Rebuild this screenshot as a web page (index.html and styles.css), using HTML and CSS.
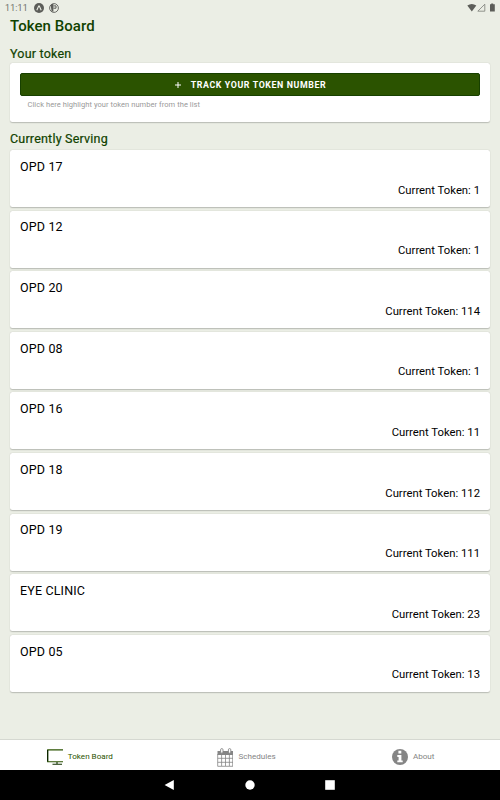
FILE: index.html
```html
<!DOCTYPE html>
<html lang="en">
<head>
    <meta charset="UTF-8">
    <meta name="viewport" content="width=device-width, initial-scale=1.0">
    <title>Token Board</title>
    <link rel="stylesheet" href="styles.css">
</head>
<body>

    <!-- Status bar -->
    <div class="status-bar">
        <span class="time">11:11</span>
        <svg class="status-icon" viewBox="0 0 10 10">
            <circle cx="5" cy="5" r="5" fill="#5c5d59"/>
            <path d="M2.8 7.2 L4.7 3 H5.3 L7.2 7.2" fill="none" stroke="#ebeee5" stroke-width="1.1"/>
        </svg>
        <svg class="status-icon" viewBox="0 0 10 10">
            <circle cx="5" cy="5" r="4.4" fill="#ebeee5" stroke="#5c5d59" stroke-width="0.9"/>
            <path d="M1.6 2.2 L3 1 H4.4 V8.8 L2.6 8.2 Z" fill="#5c5d59"/>
            <path d="M4.4 2.9 H7 V5.2 H4.4" fill="none" stroke="#5c5d59" stroke-width="1"/>
        </svg>
        <svg class="signals" viewBox="0 0 30 10">
            <path d="M0.3 2.6 Q4.8 -0.8 9.3 2.6 L4.8 8.4 Z" fill="#5c5d59"/>
            <path d="M17.8 1.2 V8.2 H10.8 Z" fill="none" stroke="#7b7d77" stroke-width="0.8"/>
            <path d="M23 1.3 H24.2 V0.4 H26.2 V1.3 H27.8 V8.4 H23 Z" fill="#5c5d59"/>
        </svg>
    </div>

    <!-- Content -->
    <div class="content">
        <h1>Token Board</h1>

        <h2>Your token</h2>
        <div class="card track">
            <button class="track-button">
                <svg class="plus" viewBox="0 0 8 8"><path d="M4 1 V7 M1 4 H7" stroke="#fff" stroke-width="1"/></svg>
                <span>TRACK YOUR TOKEN NUMBER</span>
            </button>
            <p class="hint">Click here highlight your token number from the list</p>
        </div>

        <h2 class="serving">Currently Serving</h2>
        <div class="token-list">
            <div class="card token">
                <div class="room">OPD 17</div>
                <div class="current">Current Token: 1</div>
            </div>
            <div class="card token">
                <div class="room">OPD 12</div>
                <div class="current">Current Token: 1</div>
            </div>
            <div class="card token">
                <div class="room">OPD 20</div>
                <div class="current">Current Token: 114</div>
            </div>
            <div class="card token">
                <div class="room">OPD 08</div>
                <div class="current">Current Token: 1</div>
            </div>
            <div class="card token">
                <div class="room">OPD 16</div>
                <div class="current">Current Token: 11</div>
            </div>
            <div class="card token">
                <div class="room">OPD 18</div>
                <div class="current">Current Token: 112</div>
            </div>
            <div class="card token">
                <div class="room">OPD 19</div>
                <div class="current">Current Token: 111</div>
            </div>
            <div class="card token">
                <div class="room">EYE CLINIC</div>
                <div class="current">Current Token: 23</div>
            </div>
            <div class="card token">
                <div class="room">OPD 05</div>
                <div class="current">Current Token: 13</div>
            </div>
        </div>
    </div>

    <!-- Tabs -->
    <div class="tab-bar">
        <div class="tab selected">
            <svg class="tab-icon" viewBox="0 0 16 16">
                <path d="M16 0.9 H0.7 V12.7 H16" fill="none" stroke="#2b5300" stroke-width="1.1"/>
                <path d="M0.6 1 V12.6" stroke="#0c2600" stroke-width="1.2"/>
                <path d="M10 13 V15 M5.5 15.3 H15" stroke="#123000" stroke-width="1.1"/>
            </svg>
            <span>Token Board</span>
        </div>
        <div class="tab">
            <svg class="tab-icon calendar" viewBox="0 0 16 19">
                <path d="M0.5 3 H16 V7 H0.5 Z" fill="#858585"/>
                <path d="M0.7 6 V18.3 H16 M0.7 10.3 H16 M0.7 14.3 H16 M4.6 7 V18 M8.5 7 V18 M12.4 7 V18 M15.7 6 V18" fill="none" stroke="#858585" stroke-width="0.8"/>
                <rect x="3.6" y="0.6" width="2.4" height="4.6" rx="1.2" fill="#fff" stroke="#858585" stroke-width="0.9"/>
                <rect x="11.4" y="0.6" width="2.4" height="4.6" rx="1.2" fill="#fff" stroke="#858585" stroke-width="0.9"/>
            </svg>
            <span>Schedules</span>
        </div>
        <div class="tab">
            <svg class="tab-icon" viewBox="0 0 16 16">
                <circle cx="8" cy="8" r="8" fill="#858585"/>
                <path d="M6.4 1.8 H9.3 V4.6 H6.4 Z M5.3 6 H9.4 V11.4 H10.7 V13.3 H5.3 V11.4 H6.6 V7.9 H5.3 Z" fill="#fff"/>
            </svg>
            <span>About</span>
        </div>
    </div>

    <!-- Android navigation -->
    <div class="nav-bar">
        <svg class="nav-icon" viewBox="0 0 10 10"><path d="M8.8 0 V10 L-0.4 5 Z" fill="#fff"/></svg>
        <svg class="nav-icon" viewBox="0 0 10 10"><circle cx="5" cy="5" r="4.7" fill="#fff"/></svg>
        <svg class="nav-icon" viewBox="0 0 10 10"><rect x="0.2" y="0.2" width="9.6" height="9.6" fill="#fff"/></svg>
    </div>

</body>
</html>
```

FILE: styles.css
```css
* {
    box-sizing: border-box;
}

body {
    margin: 0;
    height: 800px;
    display: flex;
    flex-direction: column;
    background-color: #ebeee5;
    font-family: Roboto, Arial, sans-serif;
    color: #000;
    overflow: hidden;
}

svg {
    display: block;
    flex-shrink: 0;
}

/* Status bar */
.status-bar {
    height: 15px;
    padding: 0 2px 0 5px;
    display: flex;
    align-items: center;
    color: #6b6d67;
}

.time {
    width: 29px;
    font-size: 8.8px;
    letter-spacing: 0.2px;
}

.status-icon {
    width: 10px;
    height: 10px;
    margin-right: 5px;
}

.signals {
    width: 30px;
    height: 10px;
    margin-left: auto;
    margin-right: 1px;
}

/* Content */
.content {
    flex: 1;
    padding: 0 10px;
}

h1, h2 {
    margin: 0;
    color: #114200;
}

h1 {
    font-size: 15px;
    font-weight: 500;
    line-height: 22px;
    letter-spacing: 0.05px;
}

h2 {
    font-size: 12.5px;
    font-weight: 400;
    line-height: 16px;
    letter-spacing: 0.2px;
    -webkit-text-stroke: 0.2px #114200;
    margin-top: 9px;
    margin-bottom: 1px;
}

.serving {
    margin-bottom: 3px;
}

.card {
    background-color: #fff;
    border-radius: 2.5px;
    box-shadow: 0 0.6px 1.2px rgba(0, 0, 0, 0.22);
}

.track {
    height: 59px;
    padding: 10px 10px 0;
}

.track-button {
    width: 100%;
    height: 23px;
    padding: 0;
    display: flex;
    justify-content: center;
    align-items: center;
    gap: 9px;
    background-color: #2b5300;
    color: #fff;
    border: 1px solid #174000;
    border-radius: 2px;
    font-family: inherit;
    font-size: 8.8px;
    font-weight: 700;
    letter-spacing: 0.62px;
}

.plus {
    width: 8px;
    height: 8px;
}

.hint {
    margin: 4px 0 0 7.5px;
    font-size: 7.5px;
    line-height: 10px;
    letter-spacing: 0.06px;
    color: #999;
}

/* Token list */
.token-list {
    display: flex;
    flex-direction: column;
    gap: 3.5px;
}

.token {
    height: 57.1px;
    padding: 8.8px 10px 0;
}

.room {
    font-size: 12.5px;
    line-height: 16px;
    letter-spacing: 0.15px;
}

.current {
    margin-top: 7.8px;
    font-size: 11.3px;
    line-height: 16px;
    text-align: right;
}

/* Tabs */
.tab-bar {
    height: 31px;
    display: flex;
    background-color: #fff;
    border-top: 1px solid #d5d8d1;
}

.tab {
    flex: 1;
    display: flex;
    justify-content: center;
    align-items: center;
    gap: 5px;
    padding: 4px 7px 0 0;
    font-size: 8.1px;
    color: #858585;
}

.selected {
    color: #2b5300;
}

.tab span {
    margin-top: -2px;
}

.tab-icon {
    width: 16px;
    height: 16px;
}

.calendar {
    height: 19px;
}

/* Android navigation */
.nav-bar {
    height: 30px;
    display: flex;
    justify-content: center;
    align-items: center;
    gap: 70px;
    background-color: #000;
}

.nav-icon {
    width: 10px;
    height: 10px;
    overflow: visible;
}
```
